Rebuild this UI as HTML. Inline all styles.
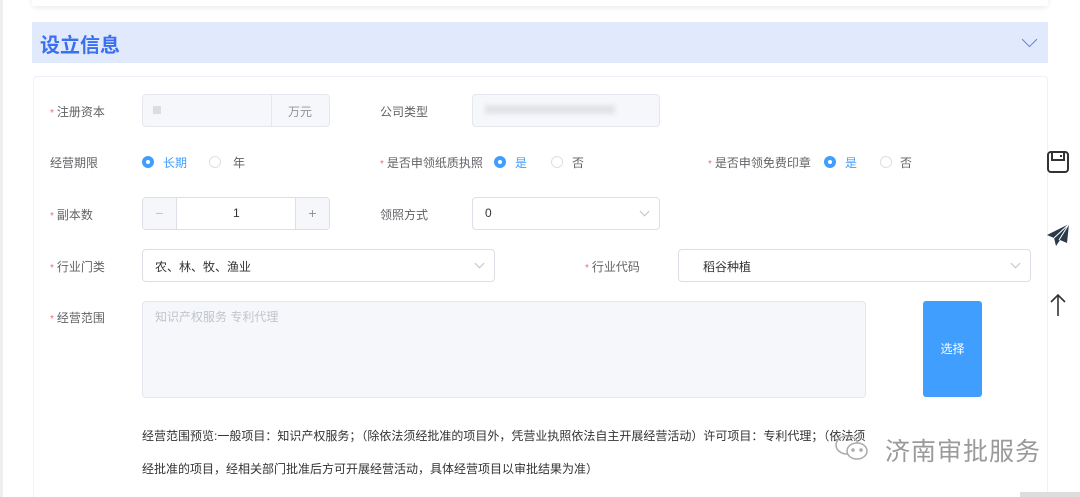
<!DOCTYPE html>
<html><head><meta charset="utf-8"><style>
*{margin:0;padding:0;box-sizing:border-box}
html{width:1080px;height:497px;overflow:hidden}
body{width:1080px;height:497px;overflow:hidden;background:#fff;font-family:"Liberation Sans","Noto Sans CJK SC",sans-serif;font-size:12px;color:#606266;position:relative}
.a{position:absolute}
.topcard{left:32px;top:-10px;width:1016px;height:16px;background:#fff;box-shadow:0 2px 6px rgba(0,0,0,.08)}
.hdr{left:32px;top:22px;width:1016px;height:41px;background:#e1eafc}
.hdr b{position:absolute;left:8px;top:7px;font-size:20px;color:#3a6ff0;font-weight:bold}
.card{left:33px;top:76px;width:1015px;height:430px;border:1px solid #eef0fb;border-radius:4px}
.lbl{font-size:12px;color:#606266}
.lbl i{color:#f56c6c;font-style:normal;font-size:10px;margin-right:3px}
.inp{border:1px solid #dcdfe6;border-radius:4px;background:#fff}
.dis{background:#f5f7fa;border-color:#e4e7ed}
.radio{width:12px;height:12px;border-radius:50%;border:1px solid #dcdfe6;background:#fff}
.on{border:none;background:#409eff}
.on::after{content:"";position:absolute;left:4px;top:4px;width:4px;height:4px;border-radius:50%;background:#fff}
.blue{color:#409eff}
.chev{width:7px;height:7px;border-right:1px solid #c0c4cc;border-bottom:1px solid #c0c4cc;transform:rotate(45deg)}
</style></head><body>
<div class="a" style="left:0;top:0;width:3px;height:497px;background:#eee"></div>
<div class="a topcard"></div>
<div class="a hdr"><b>设立信息</b><div class="a" style="left:992px;top:12px;width:11px;height:11px;border-right:1.5px solid #5b7ff0;border-bottom:1.5px solid #5b7ff0;transform:rotate(45deg)"></div></div>
<div class="a card"></div>

<div class="a lbl" style="left:50px;top:103px"><i>*</i>注册资本</div>
<div class="a inp dis" style="left:142px;top:94px;width:188px;height:33px"></div>
<div class="a" style="left:153px;top:106px;width:8px;height:8px;background:#ddd"></div>
<div class="a" style="left:271px;top:94px;width:1px;height:33px;background:#e4e7ed"></div>
<div class="a lbl" style="left:288px;top:103px;color:#909399">万元</div>
<div class="a lbl" style="left:380px;top:103px">公司类型</div>
<div class="a inp dis" style="left:472px;top:94px;width:188px;height:33px"></div>
<div class="a" style="left:485px;top:105px;width:130px;height:9px;background:#e2e3e6;filter:blur(2px)"></div>

<div class="a lbl" style="left:50px;top:154px">经营期限</div>
<div class="a radio on" style="left:142px;top:156px"></div><div class="a lbl blue" style="left:163px;top:154px">长期</div>
<div class="a radio" style="left:209px;top:156px"></div><div class="a lbl" style="left:233px;top:154px">年</div>
<div class="a lbl" style="left:380px;top:154px"><i>*</i>是否申领纸质执照</div>
<div class="a radio on" style="left:494px;top:156px"></div><div class="a lbl blue" style="left:515px;top:154px">是</div>
<div class="a radio" style="left:551px;top:156px"></div><div class="a lbl" style="left:572px;top:154px">否</div>
<div class="a lbl" style="left:708px;top:154px"><i>*</i>是否申领免费印章</div>
<div class="a radio on" style="left:824px;top:156px"></div><div class="a lbl blue" style="left:845px;top:154px">是</div>
<div class="a radio" style="left:880px;top:156px"></div><div class="a lbl" style="left:900px;top:154px">否</div>

<div class="a lbl" style="left:50px;top:206px"><i>*</i>副本数</div>
<div class="a inp" style="left:142px;top:197px;width:188px;height:33px;overflow:hidden">
<div class="a" style="left:0;top:0;width:34px;height:31px;background:#f5f7fa;border-right:1px solid #dcdfe6;text-align:center;line-height:31px;color:#c0c4cc;font-size:14px">−</div>
<div class="a" style="right:0;top:0;width:34px;height:31px;background:#f5f7fa;border-left:1px solid #dcdfe6;text-align:center;line-height:31px;color:#909399;font-size:14px">+</div>
<div class="a" style="left:90px;top:8px;color:#333">1</div></div>
<div class="a lbl" style="left:380px;top:206px">领照方式</div>
<div class="a inp" style="left:472px;top:197px;width:188px;height:33px"><span class="a" style="left:12px;top:8px;color:#333">0</span><div class="a chev" style="left:168px;top:10px"></div></div>

<div class="a lbl" style="left:50px;top:258px"><i>*</i>行业门类</div>
<div class="a inp" style="left:142px;top:249px;width:353px;height:33px"><span class="a" style="left:12px;top:8px;color:#333">农、林、牧、渔业</span><div class="a chev" style="left:333px;top:10px"></div></div>
<div class="a lbl" style="left:585px;top:258px"><i>*</i>行业代码</div>
<div class="a inp" style="left:678px;top:249px;width:353px;height:33px"><span class="a" style="left:24px;top:8px;color:#333">稻谷种植</span><div class="a chev" style="left:333px;top:10px"></div></div>

<div class="a lbl" style="left:50px;top:309px"><i>*</i>经营范围</div>
<div class="a inp dis" style="left:142px;top:301px;width:724px;height:97px"><span class="a" style="left:12px;top:6px;color:#c0c4cc">知识产权服务 专利代理</span></div>
<div class="a" style="left:923px;top:301px;width:59px;height:96px;background:#409eff;border-radius:3px;color:#fff;text-align:center;line-height:96px">选择</div>

<div class="a" style="left:142px;top:427px;color:#333;white-space:nowrap">经营范围预览:一般项目：知识产权服务；（除依法须经批准的项目外，凭营业执照依法自主开展经营活动）许可项目：专利代理；（依法须</div>
<div class="a" style="left:142px;top:460px;color:#333;white-space:nowrap">经批准的项目，经相关部门批准后方可开展经营活动，具体经营项目以审批结果为准）</div>

<svg class="a" style="left:834px;top:433px" width="36" height="30" viewBox="0 0 36 30" fill="none" stroke="#aaa" stroke-width="1.5"><ellipse cx="13" cy="12" rx="11" ry="9"/><ellipse cx="23" cy="18" rx="10" ry="8" fill="#fff"/><circle cx="19" cy="17" r="1" fill="#aaa"/><circle cx="27" cy="17" r="1" fill="#aaa"/></svg>
<div class="a" style="left:885px;top:432px;font-size:25px;color:#9a9a9a;letter-spacing:1px">济南审批服务</div>

<svg class="a" style="left:1046px;top:150px" width="24" height="24" viewBox="0 0 24 24" fill="none" stroke="#333" stroke-width="2"><rect x="2" y="2" width="20" height="20" rx="3"/><path d="M6 2v8h12V2"/><path d="M15 5v2"/></svg>
<svg class="a" style="left:1046px;top:224px" width="24" height="22" viewBox="0 0 24 22"><path d="M23 0L1 11l7 3 2 8 4-6 7 3z" fill="#2b3a4a"/><path d="M8 14l15-14-10 16" fill="none" stroke="#fff" stroke-width="1"/></svg>
<svg class="a" style="left:1049px;top:293px" width="18" height="24" viewBox="0 0 18 24" fill="none" stroke="#333" stroke-width="1.6"><path d="M9 23V2M2 9l7-7 7 7"/></svg>
<div class="a" style="left:1020px;top:492px;width:60px;height:5px;background:#ddd"></div>
</body></html>
